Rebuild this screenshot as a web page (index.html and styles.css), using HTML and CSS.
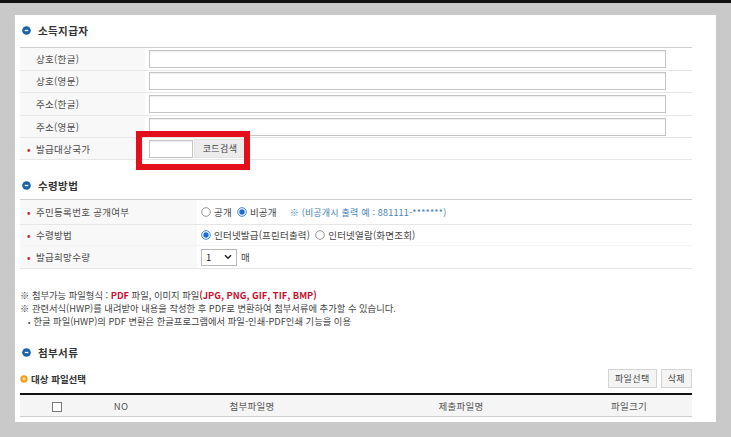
FILE: index.html
```html
<!DOCTYPE html>
<html lang="ko">
<head>
<meta charset="utf-8">
<link rel="stylesheet" href="styles.css">
</head>
<body>
<div class="topbar"></div>
<div class="panel">
  <h2 class="sec-title first">
    <svg class="sec-ico" width="9" height="9" viewBox="0 0 10 10"><circle cx="5" cy="5" r="4.8" fill="#1b63a8"/><path d="M3 5h4" stroke="#fff" stroke-width="1.5"/></svg>
    소득지급자
  </h2>
  <div class="wrap1">
    <table class="form t1">
      <colgroup><col class="c-lab1"><col></colgroup>
      <tr><th>상호(한글)</th><td><span class="inp wide"></span></td></tr>
      <tr><th>상호(영문)</th><td><span class="inp wide"></span></td></tr>
      <tr><th>주소(한글)</th><td><span class="inp wide"></span></td></tr>
      <tr><th>주소(영문)</th><td><span class="inp wide"></span></td></tr>
      <tr><th class="req"><span class="dot">•</span>발급대상국가</th><td><div class="code-row"><span class="inp small"></span><span class="btn code">코드검색</span></div></td></tr>
    </table>
    <div class="highlight"></div>
  </div>

  <h2 class="sec-title second">
    <svg class="sec-ico" width="9" height="9" viewBox="0 0 10 10"><circle cx="5" cy="5" r="4.8" fill="#1b63a8"/><path d="M3 5h4" stroke="#fff" stroke-width="1.5"/></svg>
    수령방법
  </h2>
  <table class="form t2">
    <colgroup><col class="c-lab2"><col></colgroup>
    <tr class="r1"><th class="req"><span class="dot">•</span>주민등록번호 공개여부</th>
      <td><div class="opts">
        <span class="opt"><svg class="rad" width="10" height="10" viewBox="0 0 10 10"><circle cx="5" cy="5" r="4.3" fill="#fff" stroke="#8a8a8a" stroke-width="0.9"/></svg>공개</span>
        <span class="opt"><svg class="rad" width="10" height="10" viewBox="0 0 10 10"><circle cx="5" cy="5" r="4.3" fill="#fff" stroke="#3b86d8" stroke-width="1"/><circle cx="5" cy="5" r="2.7" fill="#1c6fd1"/></svg>비공개</span>
        <span class="note-blue">※ (비공개시 출력 예 : 881111-*******)</span>
      </div></td></tr>
    <tr class="r2"><th class="req"><span class="dot">•</span>수령방법</th>
      <td><div class="opts">
        <span class="opt"><svg class="rad" width="10" height="10" viewBox="0 0 10 10"><circle cx="5" cy="5" r="4.3" fill="#fff" stroke="#3b86d8" stroke-width="1"/><circle cx="5" cy="5" r="2.7" fill="#1c6fd1"/></svg>인터넷발급(프린터출력)</span>
        <span class="opt"><svg class="rad" width="10" height="10" viewBox="0 0 10 10"><circle cx="5" cy="5" r="4.3" fill="#fff" stroke="#8a8a8a" stroke-width="0.9"/></svg>인터넷열람(화면조회)</span>
      </div></td></tr>
    <tr class="r3"><th class="req"><span class="dot">•</span>발급희망수량</th>
      <td><div class="opts">
        <span class="sel">1<svg width="8" height="6" viewBox="0 0 8 6"><path d="M1 1.3l3 3 3-3" fill="none" stroke="#222" stroke-width="1.5"/></svg></span>
        <span class="unit">매</span>
      </div></td></tr>
  </table>

  <div class="notes">
    <p>※ 첨부가능 파일형식 : <b class="red">PDF</b> 파일, 이미지 파일<b class="red">(JPG, PNG, GIF, TIF, BMP)</b></p>
    <p>※ 관련서식(HWP)를 내려받아 내용을 작성한 후 PDF로 변환하여 첨부서류에 추가할 수 있습니다.</p>
    <p class="sub"><span class="bul">•</span>한글 파일(HWP)의 PDF 변환은 한글프로그램에서 파일-인쇄-PDF인쇄 기능을 이용</p>
  </div>

  <h2 class="sec-title third">
    <svg class="sec-ico" width="9" height="9" viewBox="0 0 10 10"><circle cx="5" cy="5" r="4.8" fill="#1b63a8"/><path d="M3 5h4" stroke="#fff" stroke-width="1.5"/></svg>
    첨부서류
  </h2>
  <div class="file-bar">
    <span class="sub-title"><svg width="8" height="8" viewBox="0 0 8 8"><circle cx="4" cy="4" r="3.7" fill="#eea21f"/><circle cx="4" cy="3.8" r="1.6" fill="#ffd98a"/></svg>대상 파일선택</span>
    <span class="btns"><span class="btn">파일선택</span><span class="btn">삭제</span></span>
  </div>
  <table class="files">
    <colgroup><col class="f1"><col class="f2"><col class="f3"><col class="f4"><col></colgroup>
    <tr><th><span class="chk"></span></th><th>NO</th><th>첨부파일명</th><th>제출파일명</th><th>파일크기</th></tr>
  </table>
</div>
</body>
</html>
```

FILE: styles.css
```css
html, body {
  margin: 0;
  padding: 0;
}
body {
  background: #c9c9c9;
  font-family: "Noto Sans CJK KR", "Noto Sans", sans-serif;
  font-size: 10px;
  color: #444;
  width: 731px;
  height: 437px;
  overflow: hidden;
}
.topbar {
  height: 3px;
  background: #111;
}
.panel {
  margin: 12px 0 0 15px;
  width: 672px;
  height: 407px;
  padding: 0 24px 0 5px;
  background: #fff;
  overflow: hidden;
}
.sec-title {
  margin: 0;
  display: flex;
  align-items: center;
  gap: 7px;
  padding-left: 2px;
  height: 14px;
  font-size: 10.5px;
  font-weight: bold;
  color: #333;
  letter-spacing: 0.4px;
}
.sec-title.first { padding-top: 8px; margin-bottom: 10px; }
.sec-title.second { margin-top: 18px; margin-bottom: 7px; }
.sec-title.third { margin-top: 16px; margin-bottom: 10px; }
.sec-ico { flex: none; }

.wrap1 { position: relative; }
table.form {
  width: 672px;
  border-collapse: collapse;
  table-layout: fixed;
}
.c-lab1 { width: 125px; }
.c-lab2 { width: 177px; }
table.form th {
  background: #f8f8f8;
  text-align: left;
  font-weight: normal;
  color: #4a4a4a;
  padding: 0 0 0 16px;
  font-size: 9.5px;
  letter-spacing: 0.3px;
  white-space: nowrap;
}
table.form th.req { padding-left: 7px; }
.dot {
  display: inline-block;
  width: 9px;
  color: #d3262e;
  font-weight: bold;
}
table.form td {
  padding: 0 0 0 4px;
}
table.form tr { border-bottom: 1px solid #e6e6e6; }
table.form { border-top: 1px solid #cfcfcf; border-bottom: 1px solid #d6d6d6; }
.t1 tr { height: 22.6px; }
.t1 tr:last-child { height: 22px; }
.inp {
  display: block;
  height: 16px;
  border: 1px solid #c4c4c4;
  box-shadow: inset 0 1px 1px #eee;
  background: #fff;
}
.inp.wide { width: 515px; }
.code-row { display: flex; align-items: center; gap: 1px; }
.inp.small { width: 42px; }
.btn {
  display: inline-flex;
  align-items: center;
  justify-content: center;
  height: 17px;
  padding: 0 7px;
  border: 1px solid #d4d4d4;
  background: #f4f4f4;
  color: #444;
  font-size: 9px;
  letter-spacing: 0.4px;
}
.btn.code { width: 36px; background: #ececec; border-color: #e2e2e2; }
.highlight {
  position: absolute;
  left: 116px;
  top: 84px;
  width: 102px;
  height: 27px;
  border: 6px solid #e3101b;
}

.t2 .r1 { height: 25px; }
.t2 .r2 { height: 21px; border-bottom-color: #f4f4f4; }
.t2 .r3 { height: 23px; }
.opts {
  display: flex;
  align-items: center;
  font-size: 9.5px;
  color: #444;
  letter-spacing: 0.2px;
}
.opt { display: inline-flex; align-items: center; gap: 3px; margin-right: 5px; }
.rad { flex: none; }
.note-blue { color: #3f82b9; margin-left: 8px; font-size: 9px; }
.sel {
  display: inline-flex;
  align-items: center;
  justify-content: space-between;
  width: 26px;
  height: 15px;
  padding: 0 4px 0 4px;
  border: 1px solid #b8b8b8;
  color: #222;
  font-size: 9.5px;
}
.unit { margin-left: 4px; }

.notes { margin-top: 20px; }
.notes p {
  margin: 0;
  line-height: 13px;
  font-size: 9.3px;
  color: #444;
  white-space: nowrap;
}
.notes .red { color: #c8102e; }
.notes .sub { padding-left: 8px; }
.bul { font-size: 7px; margin-right: 3px; }

.file-bar {
  display: flex;
  align-items: center;
  justify-content: space-between;
  height: 19px;
  margin-bottom: 5px;
}
.sub-title {
  display: inline-flex;
  align-items: center;
  gap: 3px;
  font-weight: bold;
  font-size: 9.5px;
  color: #333;
}
.btns { display: flex; gap: 4px; }
.btns .btn { height: 17px; padding: 0 6px; }
table.files {
  width: 672px;
  border-collapse: collapse;
  table-layout: fixed;
  border-top: 2px solid #111;
}
.f1 { width: 74px; }
.f2 { width: 54px; }
.f3 { width: 208px; }
.f4 { width: 210px; }
table.files th {
  height: 21px;
  background: #f5f5f5;
  border-bottom: 1px solid #d0d0d0;
  font-weight: normal;
  font-size: 9.5px;
  color: #555;
  padding: 0;
  text-align: center;
  letter-spacing: 0.3px;
}
.chk {
  display: inline-block;
  width: 8px;
  height: 8px;
  border: 1px solid #777;
  background: #fff;
  vertical-align: middle;
}
```
